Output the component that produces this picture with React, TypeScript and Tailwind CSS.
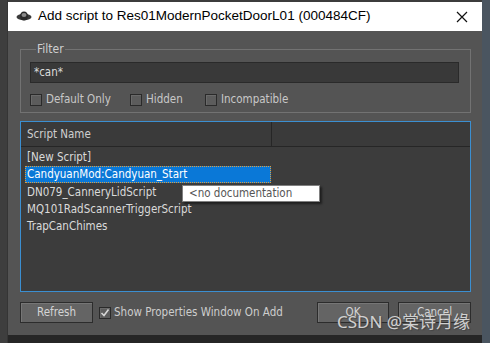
import React from "react";

const font = { fontFamily: '"DejaVu Sans Condensed", "Liberation Sans", Arial, sans-serif' };

function Check({ checked = false }: { checked?: boolean }) {
  return (
    <span className="w-[12px] h-[12px] border border-[#2a2a2a] bg-[#5c5c5c] flex items-center justify-center shrink-0 shadow-[inset_1px_1px_0_#6a6a6a]">
      {checked && (
        <svg width="10" height="10" viewBox="0 0 10 10">
          <path d="M1.5 5 L4 7.5 L8.5 1.5" stroke="#d6d6d6" strokeWidth="1.6" fill="none" />
        </svg>
      )}
    </span>
  );
}

function Btn({ children, w }: { children: React.ReactNode; w: string }) {
  return (
    <div className={`${w} h-[21px] border border-[#2c2c2c] bg-[#646464] shadow-[inset_1px_1px_0_#767676] flex items-center justify-center pt-[1px] text-[11.5px] text-[#d4d4d4]`}>
      {children}
    </div>
  );
}

export default function App() {
  return (
    <div className="w-[490px] h-[343px] bg-[#2b2b2b] flex overflow-hidden relative" style={font}>
      <div className="w-[8px] h-full bg-[#3e3e3e] border-r border-[#353535]" />
      <div className="w-[474px] flex flex-col">
        <div className="h-[2px] bg-[#3c3c3c]" />
        <div className="h-[29px] bg-white flex items-center pl-[8px] pr-[14px]">
          <svg width="16" height="12" viewBox="0 0 16 12" className="mr-[6px]">
            <ellipse cx="8" cy="6" rx="7.5" ry="3.2" fill="#3a3a3a" />
            <ellipse cx="8" cy="5" rx="4" ry="4.5" fill="#2a2a2a" />
            <ellipse cx="8" cy="4" rx="2.5" ry="2" fill="#8a8a8a" />
          </svg>
          <span className="text-[13.5px] text-black flex-1" style={{ fontFamily: '"Liberation Sans", Arial, sans-serif' }}>
            Add script to Res01ModernPocketDoorL01 (000484CF)
          </span>
          <svg width="12" height="12" viewBox="0 0 12 12">
            <path d="M1 1 L11 11 M11 1 L1 11" stroke="#111" strokeWidth="1.2" />
          </svg>
        </div>
        <div className="h-[304px] bg-[#545454] flex flex-col pl-[12px] pr-[11px] pt-[11px]">
          <fieldset className="h-[71px] border border-[#727272] px-[9px] pb-0">
            <legend className="ml-[6px] px-[1px] text-[12px] text-[#cfcfcf] leading-[14px]">Filter</legend>
            <div className="mt-[6px] h-[21px] bg-[#393939] border border-[#2a2a2a] mr-[2px] flex items-center pl-[3px] text-[11.5px] text-[#dcdcdc]">
              *can*
            </div>
            <div className="flex items-center mt-[8px] text-[11.5px] text-[#c8c8c8]">
              <Check />
              <span className="ml-[4px] w-[84px]">Default Only</span>
              <Check />
              <span className="ml-[4px] w-[59px]">Hidden</span>
              <Check />
              <span className="ml-[4px]">Incompatible</span>
            </div>
          </fieldset>
          <div className="mt-[8px] h-[171px] border border-[#3b8fd1] bg-[#3c3c3c] flex flex-col">
            <div className="h-[25px] flex bg-[#3a3a3a] border-b border-[#262626] text-[11.5px] text-[#cfcfcf]">
              <div className="w-[251px] border-r border-[#262626] flex items-center pl-[6px] pt-[2px]">Script Name</div>
              <div className="flex-1" />
            </div>
            <div className="pt-[2px] text-[11.5px] text-[#dadada] flex flex-col">
              <div className="h-[17px] flex items-center pl-[6px] pt-[1px]">[New Script]</div>
              <div className="h-[17px] ml-[4px] w-[246px] bg-[#0a78d7] border border-dotted border-[#e0a040] flex items-center pl-[1px] pt-[1px] text-white">
                CandyuanMod:Candyuan_Start
              </div>
              <div className="h-[17px] flex items-center pl-[6px] pt-[2px]">DN079_CanneryLidScript</div>
              <div className="h-[17px] flex items-center pl-[6px] pt-[2px]">MQ101RadScannerTriggerScript</div>
              <div className="h-[17px] flex items-center pl-[6px] pt-[2px]">TrapCanChimes</div>
            </div>
          </div>
          <div className="mt-[10px] flex items-center">
            <Btn w="w-[73px]">Refresh</Btn>
            <div className="ml-[6px] flex items-center">
              <Check checked />
              <span className="ml-[3px] text-[11.5px] text-[#cdcdcd]">Show Properties Window On Add</span>
            </div>
            <div className="flex-1" />
            <Btn w="w-[72px]">OK</Btn>
            <div className="w-[9px]" />
            <Btn w="w-[73px]">Cancel</Btn>
          </div>
        </div>
        <div className="flex-1 bg-[#262626]" />
      </div>
      <div className="flex-1 bg-[#4a5560]" />

      <div className="absolute left-[182px] top-[185px] w-[138px] h-[17px] bg-white border border-[#808080] shadow-[2px_2px_2px_rgba(0,0,0,0.5)] flex items-center pl-[6px] text-[11.5px] text-[#555]">
        &lt;no documentation
      </div>
      <div
        className="absolute left-[337px] top-[311px] text-[17px] text-[#d0d0d0] leading-[22px]"
        style={{ fontFamily: '"Noto Sans", "Noto Sans CJK SC", sans-serif', textShadow: "0 0 1px #555, 1px 1px 1px #444" }}
      >
        CSDN @棠诗月缘
      </div>
    </div>
  );
}
